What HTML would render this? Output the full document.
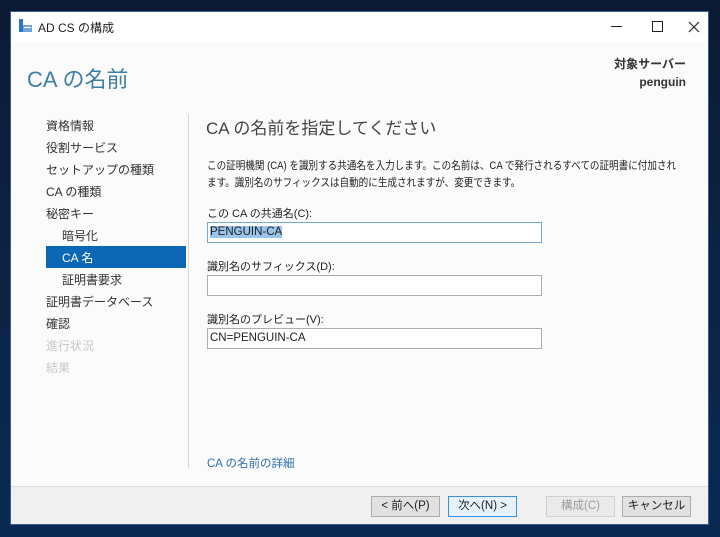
<!DOCTYPE html>
<html><head><meta charset="utf-8"><style>
*{margin:0;padding:0;box-sizing:border-box}
body{width:720px;height:537px;background:linear-gradient(180deg,#0b1a33,#0c2547 60%,#0a2a55);position:relative;overflow:hidden;font-family:"Liberation Sans","Noto Sans CJK JP",sans-serif;font-size:12px;color:#1e1e1e}
.win{position:absolute;left:10px;top:11px;width:699px;height:514px;background:#fbfbfb;border:1px solid #3a5f8a;overflow:hidden}
.tb{position:absolute;left:0;top:0;width:100%;height:30px;background:#fff}
.abs{position:absolute;white-space:nowrap}
.nav{position:absolute;left:35px;font-size:12px;color:#333;line-height:22px}
.inp{position:absolute;left:196px;width:335px;height:21px;background:#fff;border:1px solid #adadad;font-size:11.5px;padding:3px 2px}
.btn{position:absolute;top:484px;width:69px;height:21px;background:#e1e1e1;border:1px solid #adadad;text-align:center;font-size:11.5px;line-height:19px}
</style></head><body>
<div class="win">
 <div class="tb">
  <svg class="abs" style="left:7px;top:7px" width="14" height="14" viewBox="0 0 14 14"><rect x="1" y="0" width="4" height="13" fill="#2b78c2"/><rect x="5" y="6" width="9" height="7" fill="#6fa6d6"/><rect x="6" y="8" width="7" height="1" fill="#fff"/></svg>
  <div class="abs" style="left:27px;top:7px;font-size:12px">AD CS の構成</div>
  <div class="abs" style="left:600px;top:14px;width:11px;height:1px;background:#222"></div>
  <div class="abs" style="left:641px;top:9px;width:11px;height:11px;border:1px solid #222"></div>
  <svg class="abs" style="left:677px;top:9px" width="12" height="12" viewBox="0 0 12 12"><path d="M1 1L11 11M11 1L1 11" stroke="#222" stroke-width="1.1"/></svg>
 </div>
 <div class="abs" style="left:16px;top:50px;font-size:22px;color:#3d7fa3">CA の名前</div>
 <div class="abs" style="right:22px;top:43px;font-size:12px;font-weight:bold;color:#333">対象サーバー</div>
 <div class="abs" style="right:22px;top:63px;font-size:12px;font-weight:bold;color:#333">penguin</div>
 <div class="abs" style="left:177px;top:102px;width:1px;height:354px;background:#d5d5d5"></div>
 <div class="abs" style="left:35px;top:234px;width:140px;height:22px;background:#0c67b5"></div>
 <div class="nav" style="top:103px">資格情報</div>
 <div class="nav" style="top:125px">役割サービス</div>
 <div class="nav" style="top:147px">セットアップの種類</div>
 <div class="nav" style="top:169px">CA の種類</div>
 <div class="nav" style="top:191px">秘密キー</div>
 <div class="nav" style="top:213px;left:51px">暗号化</div>
 <div class="nav" style="top:235px;left:51px;color:#fff">CA 名</div>
 <div class="nav" style="top:257px;left:51px">証明書要求</div>
 <div class="nav" style="top:279px">証明書データベース</div>
 <div class="nav" style="top:301px">確認</div>
 <div class="nav" style="top:323px;color:#c8c8c8">進行状況</div>
 <div class="nav" style="top:345px;color:#c8c8c8">結果</div>
 <div class="abs" style="left:195px;top:102px;font-size:17px;color:#444">CA の名前を指定してください</div>
 <div class="abs" style="left:196px;top:146px;font-size:11px;line-height:17px;transform:scaleX(0.87);transform-origin:0 0">この証明機関 (CA) を識別する共通名を入力します。この名前は、CA で発行されるすべての証明書に付加され<br>ます。識別名のサフィックスは自動的に生成されますが、変更できます。</div>
 <div class="abs" style="left:196px;top:193px;font-size:11px">この CA の共通名(C):</div>
 <div class="inp" style="top:210px;border-color:#7aa7d6"><span style="background:#99c4ec">PENGUIN-CA</span></div>
 <div class="abs" style="left:196px;top:246px;font-size:11px">識別名のサフィックス(D):</div>
 <div class="inp" style="top:263px"></div>
 <div class="abs" style="left:196px;top:299px;font-size:11px">識別名のプレビュー(V):</div>
 <div class="inp" style="top:316px">CN=PENGUIN-CA</div>
 <div class="abs" style="left:196px;top:443px;font-size:11.5px;color:#2f6fae">CA の名前の詳細</div>
 <div class="abs" style="left:0;top:474px;width:100%;height:40px;background:#f0f0f0;border-top:1px solid #dcdcdc"></div>
 <div class="btn" style="left:360px">&lt; 前へ(P)</div>
 <div class="btn" style="left:437px;border-color:#3c8fd8;background:#e5f1fb">次へ(N) &gt;</div>
 <div class="btn" style="left:535px;color:#9a9a9a;background:#eaeaea;border-color:#cfcfcf">構成(C)</div>
 <div class="btn" style="left:611px">キャンセル</div>
</div>
</body></html>
